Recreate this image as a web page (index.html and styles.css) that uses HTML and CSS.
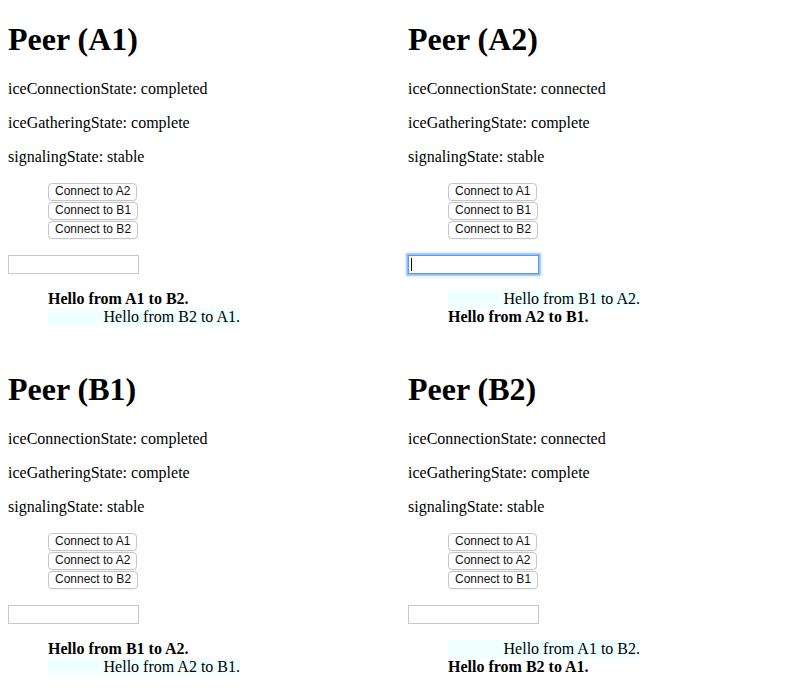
FILE: index.html
```html
<!DOCTYPE html>
<html>
<head>
<meta charset="utf-8">
<link rel="stylesheet" href="styles.css">
</head>
<body>
<div class="grid">
  <section class="peer">
    <h1>Peer (A1)</h1>
    <p>iceConnectionState: completed</p>
    <p>iceGatheringState: complete</p>
    <p>signalingState: stable</p>
    <ul class="actions">
      <li><button>Connect to A2</button></li>
      <li><button>Connect to B1</button></li>
      <li><button>Connect to B2</button></li>
    </ul>
    <div class="entry"><input type="text" class="msg-input"></div>
    <ul class="messages">
      <li class="sent">Hello from A1 to B2.</li>
      <li class="received">Hello from B2 to A1.</li>
    </ul>
  </section>
  <section class="peer">
    <h1>Peer (A2)</h1>
    <p>iceConnectionState: connected</p>
    <p>iceGatheringState: complete</p>
    <p>signalingState: stable</p>
    <ul class="actions">
      <li><button>Connect to A1</button></li>
      <li><button>Connect to B1</button></li>
      <li><button>Connect to B2</button></li>
    </ul>
    <div class="entry"><input type="text" class="msg-input focused"><span class="caret"></span></div>
    <ul class="messages">
      <li class="received">Hello from B1 to A2.</li>
      <li class="sent">Hello from A2 to B1.</li>
    </ul>
  </section>
  <section class="peer">
    <h1>Peer (B1)</h1>
    <p>iceConnectionState: completed</p>
    <p>iceGatheringState: complete</p>
    <p>signalingState: stable</p>
    <ul class="actions">
      <li><button>Connect to A1</button></li>
      <li><button>Connect to A2</button></li>
      <li><button>Connect to B2</button></li>
    </ul>
    <div class="entry"><input type="text" class="msg-input"></div>
    <ul class="messages">
      <li class="sent">Hello from B1 to A2.</li>
      <li class="received">Hello from A2 to B1.</li>
    </ul>
  </section>
  <section class="peer">
    <h1>Peer (B2)</h1>
    <p>iceConnectionState: connected</p>
    <p>iceGatheringState: complete</p>
    <p>signalingState: stable</p>
    <ul class="actions">
      <li><button>Connect to A1</button></li>
      <li><button>Connect to A2</button></li>
      <li><button>Connect to B1</button></li>
    </ul>
    <div class="entry"><input type="text" class="msg-input"></div>
    <ul class="messages">
      <li class="received">Hello from A1 to B2.</li>
      <li class="sent">Hello from B2 to A1.</li>
    </ul>
  </section>
</div>
</body>
</html>
```
FILE: styles.css
```css
html, body {
  background: #fff;
}
body {
  margin: 0 8px;
  font-family: "Liberation Serif", "Times New Roman", serif;
  font-size: 16px;
  color: #000;
}
.grid {
  display: grid;
  grid-template-columns: 400px 400px;
}
.peer {
  padding-bottom: 8px;
}
h1 {
  font-size: 32px;
  font-weight: bold;
  line-height: 37px;
  margin: 21.44px 0;
}
p {
  margin: 16px 0;
  line-height: 18px;
}
.actions {
  list-style: none;
  margin: 16px 0;
  padding: 0 0 0 40px;
}
.actions li {
  height: 19px;
  display: flex;
  align-items: flex-end;
}
.actions button {
  font-family: "Liberation Sans", Arial, sans-serif;
  font-size: 12px;
  line-height: 13px;
  height: 18px;
  padding: 0 6px;
  border: 1px solid #c6c6c6;
  border-radius: 4px;
  background: #fff;
  color: #111;
  box-shadow: 0 0.5px 0.5px rgba(0,0,0,0.08);
}
.entry {
  position: relative;
  height: 19px;
  width: 131px;
}
.msg-input {
  box-sizing: border-box;
  width: 131px;
  height: 19px;
  margin: 0;
  padding: 0 2px;
  border: 1px solid #c8c8c8;
  background: #fff;
  display: block;
  outline: none;
}
.msg-input.focused {
  border: 1px solid #5d9ce8;
  box-shadow: 0 0 0 1.5px #8fbdf3, 0 0 3px 2px rgba(110,165,235,0.45);
}
.caret {
  position: absolute;
  left: 3px;
  top: 3px;
  width: 1px;
  height: 13px;
  background: #000;
}
.messages {
  list-style: none;
  margin: 16px 0;
  padding: 0 0 0 40px;
}
.messages li {
  width: 192px;
  line-height: 18px;
}
.messages .sent {
  font-weight: bold;
  text-align: left;
}
.messages .received {
  text-align: right;
  background: #f0ffff;
}
```
